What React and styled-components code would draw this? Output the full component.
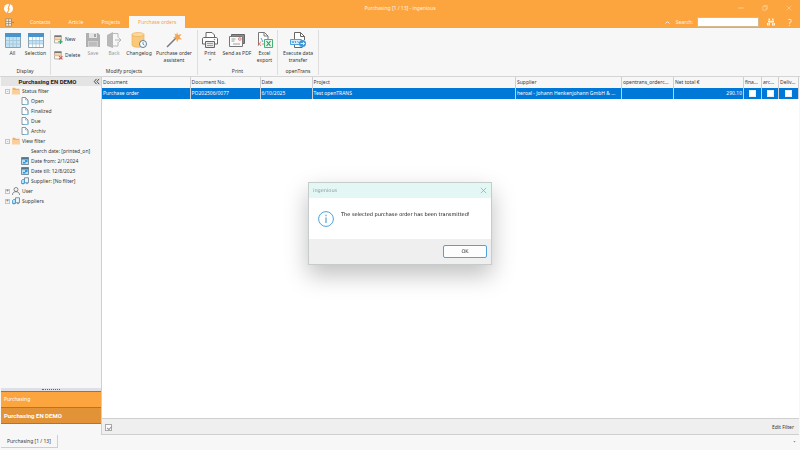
import React from 'react';
import styled, { createGlobalStyle, css } from 'styled-components';

const color = {
  orange: '#fca53f',
  orangeDark: '#e29337',
  blue: '#0078d7',
  sky: '#4ea3dc',
  text: '#383838',
  panel: '#f7f7f7',
  line: '#cfcfcf',
};

const GlobalStyle = createGlobalStyle`
  * { box-sizing: border-box; }
  body { margin: 0; background: ${color.panel}; }
  body, button, input {
    font-family: 'Noto Sans', 'Open Sans', sans-serif;
    font-size: 5px;
    line-height: 7px;
    color: ${color.text};
  }
  button { padding: 0; border: 0; background: none; cursor: pointer; }
  svg { display: block; flex: none; }
`;

const boldText = css`
  font-family: Roboto, Arial, sans-serif;
  font-size: 6px;
  font-weight: bold;
`;

/* ---------- icons ---------- */

const Svg = ({ size = 16, children, ...rest }) => (
  <svg width={size} height={size} viewBox="0 0 16 16" fill="none" aria-hidden="true" {...rest}>
    {children}
  </svg>
);

const GridIcon = ({ selection }) => (
  <Svg>
    <path d="M.5 1.500h15v14H.5z" fill={selection ? '#fff' : '#c3e3f5'} stroke="#8aa3b0" />
    {selection && <path d="M1 8h14v4H1z" fill="#c3e3f5" />}
    <path d="M0 1h16v4H0z" fill="#4795ce" />
    <path d="M1 8.500h14M1 12h14M4.500 5v10M8 5v10M11.500 5v10" stroke="#9fc0d2" strokeWidth=".7" />
  </Svg>
);

const RowIcon = ({ remove }) => (
  <Svg size={9}>
    <path d="M1 1h12v13H1z" fill="#fff" stroke="#777" />
    <path d="M1 1h12v3H1z" fill="#777" />
    <path d="M1 6h12v3.500H1z" fill="#f7b97a" />
    {remove ? (
      <path d="M9 9l6 6M15 9l-6 6" stroke="#e0504a" strokeWidth="1.800" />
    ) : (
      <path d="M11.500 8v8M7.500 12h8" stroke="#39a869" strokeWidth="2" />
    )}
  </Svg>
);

const SaveIcon = () => (
  <Svg>
    <path d="M1 1h12l2 2v12H1z" fill="#b0b0b0" />
    <path d="M4 1h8v5H4z" fill="#e4e4e4" />
    <path d="M9 2h2v3H9z" fill="#a4a4a4" />
    <path d="M3 9h10v6H3z" fill="#d0d0d0" />
    <path d="M4 11h8M4 13h8" stroke="#aaa" />
  </Svg>
);

const BackIcon = () => (
  <Svg>
    <path d="M7 1.500h5v4M12 10v4H7" stroke="#bbb" />
    <path d="M1 3l6-3v16l-6-2z" fill="#b8b8b8" />
    <path d="M9 8h6M12.500 5.500L15 8l-2.500 2.500" stroke="#b5b5b5" />
  </Svg>
);

const ChangelogIcon = () => (
  <Svg>
    <path d="M1 2.500v10.500c0 3 12 3 12 0V2.500" fill="#f9c979" stroke="#eba94b" strokeWidth=".6" />
    <ellipse cx="7" cy="2.500" rx="6" ry="2" fill="#fbd99f" stroke="#eba94b" strokeWidth=".6" />
    <circle cx="12" cy="12" r="3.500" fill="#fff" stroke="#5b7f97" />
    <path d="M12 10v2.200l1.500 1" stroke="#4b6f88" strokeWidth=".8" />
  </Svg>
);

const WandIcon = () => (
  <Svg>
    <path d="M1 15L10 6" stroke="#777" strokeWidth="1.500" />
    <path d="M11 0l1 3 3.500-1-2 3 2.500 2.500-3.500-.3-1.500 3-.8-3.500L7 6l2.500-1.700L8.500 1.500l2 1z" fill="#f5a650" />
  </Svg>
);

const PrinterIcon = () => (
  <Svg>
    <path d="M4 5V.5h6L12.500 3v2" fill="#fff" stroke="#666" />
    <path d="M2 5.500h12c1 0 1.500.5 1.500 1.500v5h-3M3.500 12h-3V7c0-1 .5-1.500 1.500-1.500" fill="#fff" stroke="#666" />
    <path d="M3.500 9.500h9v6h-9z" fill="#e8e8e8" stroke="#666" />
    <path d="M5 11.500h6M5 13.500h6" stroke="#888" strokeWidth=".8" />
    <circle cx="12.500" cy="7.500" r=".8" fill="#4ea3dc" />
  </Svg>
);

const MailIcon = () => (
  <Svg>
    <path d="M2.500 5V2.500h13v9H13" fill="#8c8c8c" stroke="#666" />
    <path d="M.5 4.500h13v10H.5z" fill="#fafafa" stroke="#777" />
    <path d="M2.500 7h4M2.500 9h3M4 12h7" stroke="#888" strokeWidth=".8" />
    <circle cx="10.800" cy="7" r="1.400" fill="#f9d5cf" stroke="#e2665c" strokeWidth=".7" />
  </Svg>
);

const ExcelIcon = () => (
  <Svg>
    <path d="M1.500 13V.5h6L11 4v4" fill="#fff" stroke="#777" />
    <path d="M7 .5V4h4" stroke="#777" />
    <path d="M1 10l3 4M4 9.500L1 14M5 12h2" stroke="#e2665c" strokeWidth=".8" />
    <path d="M4 6l2 4" stroke="#4ea3dc" />
    <path d="M7.500 7.500h8v8h-8z" fill="#e6f6ec" stroke="#48b175" />
    <path d="M9.500 9l4 5M13.500 9l-4 5" stroke="#2c9c5c" strokeWidth="1.200" />
  </Svg>
);

const TransferIcon = () => (
  <Svg>
    <path d="M4.500 8V.5h6l4 4V8M4.500 13v2.500h8" fill="#fff" stroke="#666" />
    <path d="M10.500.5v4h4" stroke="#666" />
    <path d="M.5 7.500h11v5H.5z" fill="#d7ecf9" stroke="#4ea3dc" />
    <path d="M2 9l1 2 1-2M5.500 9v2M7.500 9l1 2" stroke="#3b8fce" strokeWidth=".8" />
    <circle cx="12.500" cy="11.500" r="3.500" fill="#3f97d5" />
    <path d="M10.500 11.500h4M13 10l1.500 1.500L13 13" stroke="#fff" strokeWidth=".8" />
  </Svg>
);

const FolderIcon = () => (
  <Svg size={8}>
    <path d="M1 14V1.500h5l1.500 2H15V14z" fill="#eeb06c" />
    <path d="M0 6h16v9H0z" fill="#fbcf9c" />
  </Svg>
);

const PageIcon = () => (
  <Svg size={8}>
    <path d="M2 1h7l5 5v9H2z" fill="#fff" stroke="#657985" strokeWidth="1.500" />
    <path d="M9 1v5h5" stroke="#657985" />
    <path d="M14 8v7H7" stroke="#78c4ea" strokeWidth="1.800" />
  </Svg>
);

const CalendarIcon = () => (
  <Svg size={8}>
    <path d="M1 1h14v14H1z" fill="#b9def4" stroke="#54748a" strokeWidth="1.500" />
    <path d="M1 1h14v4H1z" fill="#54748a" />
    <path d="M8 6h5v4H8zM4 10h5v3H4z" fill="#2f97dc" />
  </Svg>
);

const SupplierIcon = () => (
  <Svg size={8}>
    <path d="M7 1.500h8v10H7z" fill="#e9f5fc" stroke="#597488" strokeWidth="1.500" />
    <path d="M1 13V7l2-2h4v8z" fill="#b9e0f6" stroke="#3192d3" strokeWidth="1.500" />
    <circle cx="4" cy="13.500" r="1.500" fill="#3192d3" />
    <circle cx="12" cy="13" r="1.500" fill="#3192d3" />
  </Svg>
);

const UserIcon = () => (
  <Svg size={8}>
    <circle cx="8" cy="5" r="4" stroke="#666" strokeWidth="1.500" />
    <path d="M1 16c0-4 2-6 5-6.500h4c3 .5 5 2.500 5 6.500" stroke="#666" strokeWidth="1.500" />
  </Svg>
);

const LogoIcon = () => (
  <Svg size={9}>
    <circle cx="8" cy="8" r="8" fill="#fff" />
    <path d="M10 0L7.500 8 9 9 6 16" stroke={color.orange} strokeWidth="2" />
  </Svg>
);

const MenuIcon = () => (
  <Svg size={9}>
    <path d="M1.500 1.500h10v13h-10zM6.500 2v12M2 6h9M2 10h9" fill="#fff3e2" stroke="#8f7a5c" strokeWidth="1.300" />
    <path d="M12.500 7h3.500l-1.700 2z" fill="#6b5b43" />
  </Svg>
);

const BinocularsIcon = () => (
  <Svg size={8}>
    <path d="M3 1h3v3H3zM10 1h3v3h-3zM2 5h5v4H2zM9 5h5v4H9zM0 10h6v5H0zM10 10h6v5h-6zM7 6h2v3H7z" fill="#fff3e2" />
    <path d="M2 12h2M12 12h2" stroke={color.orange} strokeWidth="2" />
  </Svg>
);

const InfoIcon = () => (
  <Svg>
    <circle cx="8" cy="8" r="7.400" stroke={color.sky} />
    <path d="M8 6.500v5.500M8 3.800v1.400" stroke={color.sky} strokeWidth="1.200" />
  </Svg>
);

const CollapseIcon = () => (
  <Svg size={7}>
    <path d="M8 2L3 8l5 6M14 2L9 8l5 6" stroke="#333" strokeWidth="2" />
  </Svg>
);

const CrossIcon = ({ size = 6 }) => (
  <Svg size={size}>
    <path d="M2 2l12 12M14 2L2 14" stroke="currentColor" strokeWidth="1.500" />
  </Svg>
);

/* ---------- window and ribbon ---------- */

const Window = styled.div`
  display: flex;
  flex-direction: column;
  min-height: 100vh;
`;

const TitleBar = styled.header`
  display: grid;
  grid-template-columns: 1fr auto 1fr;
  align-items: center;
  height: 16px;
  padding: 0 4px;
  background: ${color.orange};
  color: #fff3e2;
`;

const WindowControls = styled.div`
  display: flex;
  justify-content: flex-end;
  gap: 16px;
  padding-right: 3px;
`;

const BarButton = styled.button`
  display: flex;
  align-items: center;
  justify-content: center;
  width: 8px;
  height: 8px;
  color: #fdd9ac;
`;

const HelpButton = styled(BarButton)`
  color: #fff3e2;
  font-size: 9px;
`;

const TabBar = styled.nav`
  display: flex;
  align-items: stretch;
  height: 12px;
  padding-left: 5px;
  background: ${color.orange};
`;

const MenuButton = styled(BarButton)`
  width: 16px;
  height: 12px;
  justify-content: flex-start;
`;

const Tab = styled.a`
  display: flex;
  align-items: center;
  padding: 0 9px;
  color: #fff3e2;
  text-decoration: none;

  ${props => props.$active && css`
    background: ${color.panel};
    color: #f8a34a;
  `}
`;

const Search = styled.div`
  display: flex;
  align-items: center;
  gap: 4px;
  margin-left: auto;
  padding-right: 6px;
  color: #fff3e2;
`;

const SearchInput = styled.input`
  width: 62px;
  height: 10px;
  margin-right: 4px;
  padding: 0 2px;
  border: 1px solid #d9b88c;
  background: #fff;
`;

const SearchTools = styled.div`
  display: flex;
  gap: 11px;
`;

const Ribbon = styled.div`
  display: flex;
  height: 49px;
  padding: 2px 0 1px;
  border-bottom: 1px solid #d5d5d5;
  background: ${color.panel};
`;

const Group = styled.section`
  display: flex;
  flex-direction: column;
  justify-content: space-between;
  padding: 2px 2px 0;
  border-right: 1px solid #dedede;
`;

const GroupItems = styled.div`
  display: flex;
`;

const GroupLabel = styled.div`
  text-align: center;
`;

const ToolButton = styled.button`
  display: flex;
  flex-direction: column;
  align-items: center;
  gap: 2px;
  width: ${props => props.$width}px;
  color: ${props => (props.disabled ? '#9b9b9b' : color.text)};
  white-space: nowrap;
`;

const SmallTools = styled.div`
  display: flex;
  flex-direction: column;
  gap: 7px;
  width: 30px;
  padding: 3px 0 0 1px;
`;

const SmallButton = styled.button`
  display: flex;
  align-items: center;
  gap: 2px;
`;

const Arrow = styled.span`
  display: block;
  width: 3px;
  height: 2px;
  background: #888;
  clip-path: polygon(0 0, 100% 0, 50% 100%);
`;

/* ---------- sidebar ---------- */

const Workspace = styled.main`
  display: flex;
  flex: 1;
`;

const Sidebar = styled.aside`
  display: flex;
  flex-direction: column;
  width: 102px;
  padding: 0 0 11px 1px;
  border-right: 1px solid ${color.line};
  background: ${color.panel};
`;

const SidebarHeader = styled.div`
  display: flex;
  align-items: center;
  height: 9px;
  padding: 0 1px;
  background: #e4e4e4;
  color: #222;
`;

const SidebarTitle = styled.span`
  flex: 1;
  ${boldText}
  text-align: center;
`;

const Tree = styled.ul`
  flex: 1;
  margin: 0;
  padding: 0;
  list-style: none;
`;

const TreeRow = styled.div`
  display: flex;
  align-items: center;
  gap: 2px;
  height: 10px;
  padding-left: ${props => (props.$child ? '20px' : '4px')};
  white-space: nowrap;
`;

const Expander = styled.button`
  display: grid;
  place-items: center;
  width: 5px;
  height: 5px;
  border: 1px solid #c4c4c4;
  color: #666;
  line-height: 3px;
`;

const IconSlot = styled.span`
  width: 8px;
`;

const Splitter = styled.div`
  height: 4px;
  padding-top: 1px;
  border-bottom: 1px solid #9c7440;
  background: #dfe0e6;

  &::after {
    content: '';
    display: block;
    width: 18px;
    margin: 0 auto;
    border-top: 1px dotted #666;
  }
`;

const ModuleButton = styled.button`
  height: 16px;
  padding: 0 3px;
  border-bottom: 1px solid #b0762f;
  background: ${props => (props.$active ? color.orangeDark : color.orange)};
  color: #fff;
  ${props => props.$active && boldText}
  text-align: left;
`;

/* ---------- table ---------- */

const Content = styled.section`
  display: flex;
  flex: 1;
  flex-direction: column;
  min-width: 0;
  margin-right: 1px;
  background: #fff;
`;

const OrderTable = styled.table`
  width: 100%;
  table-layout: fixed;
  border-collapse: collapse;
  background: ${color.panel};

  th, td {
    height: 11px;
    padding: 0 1px;
    border-right: 1px solid ${color.line};
    font-weight: normal;
    text-align: left;
    white-space: nowrap;
  }
`;

const OrderRow = styled.tr`
  background: ${color.blue};
  color: #fff;
`;

const Amount = styled.span`
  display: block;
  text-align: right;
`;

const CheckBox = styled.input`
  display: block;
  width: 7px;
  height: 7px;
  margin: 0 auto;
  appearance: none;
  border: 1px solid #eee;
  background: #fff;

  &:checked {
    border-color: #aaa;
  }

  &:checked::after {
    content: '';
    display: block;
    width: 4px;
    height: 2px;
    margin: 1px;
    border: solid #999;
    border-width: 0 0 1px 1px;
    transform: rotate(-45deg);
  }
`;

const FilterBar = styled.div`
  display: flex;
  align-items: center;
  justify-content: space-between;
  height: 17px;
  margin-top: auto;
  padding: 1px 5px 0 3px;
  border: solid ${color.line};
  border-width: 1px 0;
  background: #efefef;

  ${CheckBox} {
    margin: 0;
  }
`;

const StatusBar = styled.footer`
  display: flex;
  align-items: center;
  justify-content: space-between;
  height: 15px;
  padding: 0 4px 2px 1px;
`;

const DocumentTab = styled.button`
  height: 13px;
  padding: 0 6px;
  border: solid ${color.line};
  border-width: 0 1px 1px 0;
`;

/* ---------- dialog ---------- */

const Overlay = styled.div`
  position: fixed;
  inset: 0;
  display: grid;
  place-items: center;
  padding-bottom: 4px;
`;

const Dialog = styled.div`
  width: 184px;
  border: 1px solid #c6cccc;
  background: #fff;
  box-shadow: 0 10px 22px rgba(0, 0, 0, 0.25);
`;

const DialogHeader = styled.div`
  display: flex;
  align-items: center;
  justify-content: space-between;
  height: 15px;
  padding: 0 4px;
  background: #e3f7f5;
  color: #929b9b;
  font-family: 'DejaVu Sans', sans-serif;
`;

const DialogClose = styled.button`
  color: #8d9a9a;
`;

const DialogBody = styled.div`
  display: flex;
  gap: 7px;
  height: 41px;
  padding: 13px 9px;
  color: #111;
  font-family: 'DejaVu Sans', sans-serif;
`;

const DialogFooter = styled.div`
  display: flex;
  justify-content: flex-end;
  padding: 6px 4px;
  background: #efefef;
`;

const OkButton = styled.button`
  width: 44px;
  height: 13px;
  border: 1px solid ${color.sky};
  border-radius: 2px;
  background: #fdfdfd;
  font-family: 'DejaVu Sans', sans-serif;
`;

const tabs = ['Contacts', 'Article', 'Projects', 'Purchase orders'];

const ribbonGroups = [
  {
    label: 'Display',
    tools: [
      { lines: ['All'], icon: <GridIcon />, width: 21 },
      { lines: ['Selection'], icon: <GridIcon selection />, width: 25 },
    ],
  },
  {
    label: 'Modify projects',
    small: true,
    tools: [
      { lines: ['Save'], icon: <SaveIcon />, width: 20, disabled: true },
      { lines: ['Back'], icon: <BackIcon />, width: 22, disabled: true },
      { lines: ['Changelog'], icon: <ChangelogIcon />, width: 28 },
      { lines: ['Purchase order', 'assistent'], icon: <WandIcon />, width: 42 },
    ],
  },
  {
    label: 'Print',
    tools: [
      { lines: ['Print'], icon: <PrinterIcon />, width: 20, arrow: true },
      { lines: ['Send as PDF'], icon: <MailIcon />, width: 34 },
      { lines: ['Excel', 'export'], icon: <ExcelIcon />, width: 21 },
    ],
  },
  {
    label: 'openTrans',
    tools: [{ lines: ['Execute data', 'transfer'], icon: <TransferIcon />, width: 36 }],
  },
];

const tree = [
  {
    label: 'Status filter',
    icon: <FolderIcon />,
    items: [
      { label: 'Open', icon: <PageIcon /> },
      { label: 'Finalized', icon: <PageIcon /> },
      { label: 'Due', icon: <PageIcon /> },
      { label: 'Archiv', icon: <PageIcon /> },
    ],
  },
  {
    label: 'View filter',
    icon: <FolderIcon />,
    items: [
      { label: 'Search date: [printed_on]' },
      { label: 'Date from: 2/1/2024', icon: <CalendarIcon /> },
      { label: 'Date till: 12/8/2025', icon: <CalendarIcon /> },
      { label: 'Supplier: [No filter]', icon: <SupplierIcon /> },
    ],
  },
  { label: 'User', icon: <UserIcon /> },
  { label: 'Suppliers', icon: <SupplierIcon /> },
];

const Col = styled.col`
  width: ${props => (props.$width ? `${props.$width}px` : 'auto')};
`;

const columns = [
  { title: 'Document', width: 88, value: 'Purchase order' },
  { title: 'Document No.', width: 70, value: 'PO202506/0077' },
  { title: 'Date', width: 52, value: '6/10/2025' },
  { title: 'Project', value: 'Test openTRANS' },
  { title: 'Supplier', width: 106, value: 'heroal - Johann Henkenjohann GmbH & ...' },
  { title: 'opentrans_orderc...', width: 52, value: '' },
  { title: 'Net total €', width: 70, value: <Amount>290.10</Amount> },
  { title: 'fina...', width: 18, check: true },
  { title: 'arc...', width: 17, check: true },
  { title: 'Deliv...', width: 20, check: true },
];

const App = () => (
  <Window>
    <GlobalStyle />
    <TitleBar>
      <LogoIcon />
      <span>Purchasing [1 / 13] - ingenious</span>
      <WindowControls>
        <BarButton aria-label="Minimize">
          <Svg size={6}><path d="M1 8h14" stroke="currentColor" strokeWidth="2" /></Svg>
        </BarButton>
        <BarButton aria-label="Restore">
          <Svg size={6}><path d="M2 4h9v10H2zM5 4V1h9v10h-3" stroke="currentColor" strokeWidth="1.500" /></Svg>
        </BarButton>
        <BarButton aria-label="Close"><CrossIcon /></BarButton>
      </WindowControls>
    </TitleBar>

    <TabBar>
      <MenuButton aria-label="Menu"><MenuIcon /></MenuButton>
      {tabs.map(tab => (
        <Tab href="#" key={tab} $active={tab === 'Purchase orders'}>{tab}</Tab>
      ))}
      <Search>
        <BarButton aria-label="Collapse ribbon">
          <Svg size={5}><path d="M2 11l6-6 6 6" stroke="#fff" strokeWidth="2.500" /></Svg>
        </BarButton>
        <label htmlFor="search">Search:</label>
        <SearchInput id="search" />
        <SearchTools>
          <BarButton aria-label="Find"><BinocularsIcon /></BarButton>
          <HelpButton>?</HelpButton>
        </SearchTools>
      </Search>
    </TabBar>

    <Ribbon>
      {ribbonGroups.map(group => (
        <Group key={group.label}>
          <GroupItems>
            {group.small && (
              <SmallTools>
                <SmallButton><RowIcon />New</SmallButton>
                <SmallButton><RowIcon remove />Delete</SmallButton>
              </SmallTools>
            )}
            {group.tools.map(tool => (
              <ToolButton key={tool.lines[0]} $width={tool.width} disabled={tool.disabled}>
                {tool.icon}
                <span>
                  {tool.lines[0]}
                  {tool.lines[1] && <><br />{tool.lines[1]}</>}
                </span>
                {tool.arrow && <Arrow />}
              </ToolButton>
            ))}
          </GroupItems>
          <GroupLabel>{group.label}</GroupLabel>
        </Group>
      ))}
    </Ribbon>

    <Workspace>
      <Sidebar>
        <SidebarHeader>
          <SidebarTitle>Purchasing EN DEMO</SidebarTitle>
          <button aria-label="Collapse sidebar"><CollapseIcon /></button>
        </SidebarHeader>
        <Tree>
          {tree.map(node => (
            <li key={node.label}>
              <TreeRow>
                <Expander>{node.items ? '-' : '+'}</Expander>
                {node.icon}
                {node.label}
              </TreeRow>
              {node.items && (
                <Tree>
                  {node.items.map(item => (
                    <li key={item.label}>
                      <TreeRow $child>
                        <IconSlot>{item.icon}</IconSlot>
                        {item.label}
                      </TreeRow>
                    </li>
                  ))}
                </Tree>
              )}
            </li>
          ))}
        </Tree>
        <Splitter />
        <ModuleButton>Purchasing</ModuleButton>
        <ModuleButton $active>Purchasing EN DEMO</ModuleButton>
      </Sidebar>

      <Content>
        <OrderTable>
          <colgroup>
            {columns.map(col => <Col key={col.title} $width={col.width} />)}
          </colgroup>
          <thead>
            <tr>
              {columns.map(col => <th key={col.title}>{col.title}</th>)}
            </tr>
          </thead>
          <tbody>
            <OrderRow>
              {columns.map(col => (
                <td key={col.title}>
                  {col.check ? <CheckBox type="checkbox" aria-label={col.title} /> : col.value}
                </td>
              ))}
            </OrderRow>
          </tbody>
        </OrderTable>
        <FilterBar>
          <CheckBox type="checkbox" aria-label="Filter active" defaultChecked />
          <button>Edit Filter</button>
        </FilterBar>
      </Content>
    </Workspace>

    <StatusBar>
      <DocumentTab>Purchasing [1 / 13]</DocumentTab>
      <Arrow />
    </StatusBar>

    <Overlay>
      <Dialog role="dialog" aria-label="ingenious">
        <DialogHeader>
          ingenious
          <DialogClose aria-label="Close dialog"><CrossIcon size={7} /></DialogClose>
        </DialogHeader>
        <DialogBody>
          <InfoIcon />
          The selected purchase order has been transmitted!
        </DialogBody>
        <DialogFooter>
          <OkButton>OK</OkButton>
        </DialogFooter>
      </Dialog>
    </Overlay>
  </Window>
);

export default App;
